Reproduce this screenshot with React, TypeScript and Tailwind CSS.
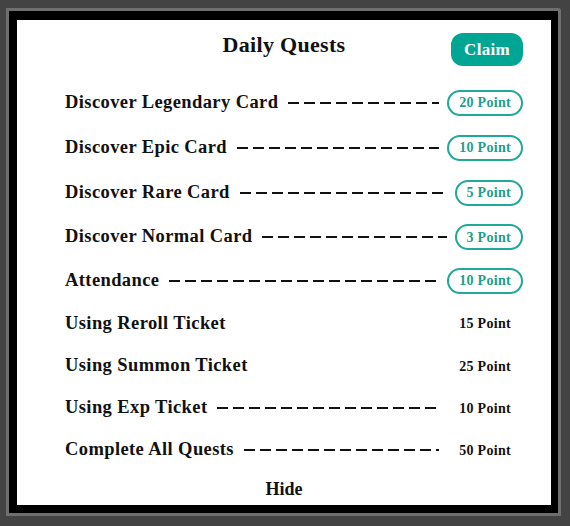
// Daily quests panel: framed white sheet with quest rows, dashed leaders and point pills.

type Quest = { label: string; points: string; dashed: boolean; claimable: boolean; h: string };

const QUESTS: Quest[] = [
  { label: "Discover Legendary Card", points: "20 Point", dashed: true, claimable: true, h: "h-[45px]" },
  { label: "Discover Epic Card", points: "10 Point", dashed: true, claimable: true, h: "h-[45px]" },
  { label: "Discover Rare Card", points: "5 Point", dashed: true, claimable: true, h: "h-[45px]" },
  { label: "Discover Normal Card", points: "3 Point", dashed: true, claimable: true, h: "h-[44px]" },
  { label: "Attendance", points: "10 Point", dashed: true, claimable: true, h: "h-[43px]" },
  { label: "Using Reroll Ticket", points: "15 Point", dashed: false, claimable: false, h: "h-[43px]" },
  { label: "Using Summon Ticket", points: "25 Point", dashed: false, claimable: false, h: "h-[42px]" },
  { label: "Using Exp Ticket", points: "10 Point", dashed: true, claimable: false, h: "h-[42px]" },
  { label: "Complete All Quests", points: "50 Point", dashed: true, claimable: false, h: "h-[42px]" },
];

export default function App() {
  return (
    <div className="min-h-[526px] w-[570px] bg-[#434343] pl-[6px] pt-[8px] font-['Liberation_Serif',serif] text-[#111]">
      <div className="w-[555px] rounded-tr-[3px] border-[3px] border-[#6f6f6f] bg-black pb-[8px] pl-[8px] pr-[7px] pt-[9px]">
        <div className="h-[485px] bg-white">
          <div className="grid grid-cols-[1fr_auto_1fr] items-start">
            <div />
            <h1 className="pt-[11px] text-[22px] font-bold leading-[28px] tracking-[0.3px]">Daily Quests</h1>
            <div className="flex justify-end pr-[28px] pt-[13px]">
              <button className="h-[33px] rounded-[12px] bg-[#00a693] px-[13px] text-[17px] font-bold tracking-[0.3px] text-white">
                Claim
              </button>
            </div>
          </div>

          <div className="mt-[14px] flex flex-col pl-[48px] pr-[28px]">
            {QUESTS.map((q) => (
              <QuestRow key={q.label} quest={q} />
            ))}
          </div>

          <div className="mt-[6px] text-center text-[18px] font-bold leading-[24px]">Hide</div>
        </div>
      </div>
    </div>
  );
}

function QuestRow({ quest }: { quest: Quest }) {
  return (
    <div className={`flex items-center ${quest.h}`}>
      <span className="text-[18.5px] font-bold tracking-[0.4px] whitespace-nowrap">{quest.label}</span>
      {quest.dashed ? (
        <div className="ml-[10px] mr-[8px] h-[2px] flex-1 bg-[repeating-linear-gradient(90deg,#111_0_11px,transparent_11px_16px)]" />
      ) : (
        <div className="flex-1" />
      )}
      <span
        className={`flex h-[26px] items-center rounded-full border-2 px-[10px] text-[14px] font-bold tracking-[0.3px] whitespace-nowrap ${
          quest.claimable ? "border-[#20a898] text-[#1a9e8e]" : "border-transparent text-[#111]"
        }`}
      >
        {quest.points}
      </span>
    </div>
  );
}
